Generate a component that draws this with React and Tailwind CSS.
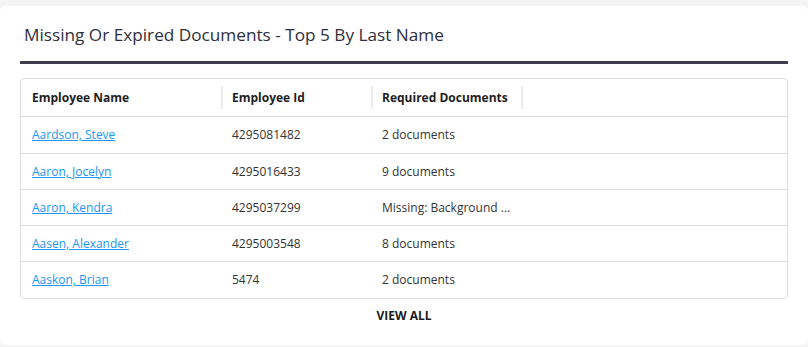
import React from 'react'

const rows = [
  { name: 'Aardson, Steve', id: '4295081482', docs: '2 documents' },
  { name: 'Aaron, Jocelyn', id: '4295016433', docs: '9 documents' },
  { name: 'Aaron, Kendra', id: '4295037299', docs: 'Missing: Background ...' },
  { name: 'Aasen, Alexander', id: '4295003548', docs: '8 documents' },
  { name: 'Aaskon, Brian', id: '5474', docs: '2 documents' },
]

const HeaderCell = ({ children, width, first }) => (
  <div className={`flex h-full items-center ${width}`}>
    {!first && <div className="h-[23px] w-[2px] bg-[#ececec]" />}
    <span className={first ? 'pl-[11px]' : 'pl-[9px]'}>{children}</span>
  </div>
)

const App = () => {
  return (
    <div className="h-[347px] w-[808px] bg-[#f4f4f4] pt-[6px] font-['Open_Sans',sans-serif]">
      <div className="h-[339px] rounded-[5px] bg-white px-[20px]">
        <h2 className="pl-[4px] pt-[17px] text-[17.2px] leading-[24px] text-[#2f2f3d]">
          Missing Or Expired Documents - Top 5 By Last Name
        </h2>
        <div className="mt-[14px] h-[3px] bg-[#3e3d4b]" />
        <div className="mt-[14px] rounded-[4px] border border-[#dcdcdc]">
          <div className="flex h-[38px] items-center border-b border-[#dcdcdc] text-[12px] font-bold text-[#1e1e1e]">
            <HeaderCell width="w-[200px]" first>Employee Name</HeaderCell>
            <HeaderCell width="w-[150px]">Employee Id</HeaderCell>
            <HeaderCell width="w-[150px]">Required Documents</HeaderCell>
            <div className="h-[23px] w-[2px] bg-[#ececec]" />
          </div>
          {rows.map((r, idx) => (
            <div
              key={r.id}
              className={`flex h-[36px] items-center text-[12px] text-[#333] ${
                idx < rows.length - 1 ? 'border-b border-[#dcdcdc]' : ''
              } ${idx === 0 ? 'h-[37px]' : ''}`}
            >
              <div className="w-[200px] pl-[11px]">
                <a href="#" className="text-[#2196f3] underline">
                  {r.name}
                </a>
              </div>
              <div className="w-[150px] pl-[11px]">{r.id}</div>
              <div className="w-[150px] whitespace-nowrap pl-[11px]">{r.docs}</div>
            </div>
          ))}
        </div>
        <div className="pt-[8px] text-center text-[12px] font-bold text-[#1a1a1a]">
          VIEW ALL
        </div>
      </div>
    </div>
  )
}

export default App
